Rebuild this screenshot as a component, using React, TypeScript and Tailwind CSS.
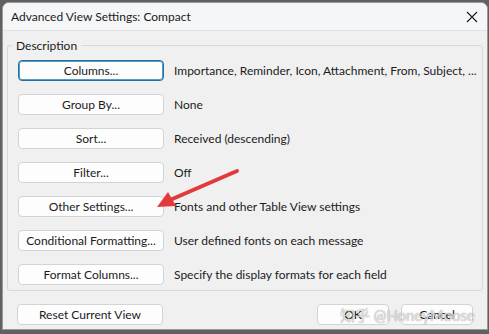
import React from "react";

const rows = [
  { label: "Columns...", desc: "Importance, Reminder, Icon, Attachment, From, Subject, ...", focused: true },
  { label: "Group By...", desc: "None" },
  { label: "Sort...", desc: "Received (descending)" },
  { label: "Filter...", desc: "Off" },
  { label: "Other Settings...", desc: "Fonts and other Table View settings" },
  { label: "Conditional Formatting...", desc: "User defined fonts on each message" },
  { label: "Format Columns...", desc: "Specify the display formats for each field" },
];

function DlgButton({ label, focused, className }: { label: string; focused?: boolean; className?: string }) {
  return (
    <button
      type="button"
      className={[
        "flex h-[21px] items-center justify-center whitespace-nowrap rounded-[4px] bg-[#fdfdfd] text-[12px] text-[#1b1b1b]",
        focused ? "border border-[#1f6f9f] shadow-[inset_0_0_0_1px_#5a9bc4]" : "border border-[#d3d3d3]",
        className ?? "",
      ].join(" ")}
    >
      {label}
    </button>
  );
}

export default function App() {
  return (
    <div
      className="relative h-[334px] w-[489px] overflow-hidden bg-[#5f6163]"
      style={{ fontFamily: 'Lato, "Noto Sans", "Noto Sans CJK SC", sans-serif' }}
    >
      <div className="ml-[2px] mt-[2px] flex h-[328px] w-[486px] flex-col overflow-hidden rounded-t-[7px] border border-[#9a9a9a] bg-[#f0f0f0]">
        {/* title bar */}
        <div className="flex h-[28px] shrink-0 items-center justify-between border-b border-[#e2e2e2] bg-[#f5f6f8] pl-[8px] pr-[9px]">
          <span className="text-[12px] text-[#1b1b1b]">Advanced View Settings: Compact</span>
          <svg width="12" height="12" viewBox="0 0 12 12" className="mt-[1px]">
            <path d="M1 1 L11 11 M11 1 L1 11" stroke="#1b1b1b" strokeWidth="1.1" />
          </svg>
        </div>

        {/* group box */}
        <div className="relative mx-[4px] mt-[14px] h-[246px] rounded-[3px] border border-[#d8d8d8] px-[10px] pt-[14px]">
          <span className="absolute -top-[9px] left-[4px] bg-[#f0f0f0] px-[4px] text-[12px] text-[#1b1b1b]">
            Description
          </span>
          <div className="flex flex-col gap-[13px]">
            {rows.map((r) => (
              <div key={r.label} className="flex items-center gap-[10px]">
                <DlgButton label={r.label} focused={r.focused} className="w-[146px] shrink-0" />
                <span className="whitespace-nowrap text-[12px] text-[#1b1b1b]">{r.desc}</span>
              </div>
            ))}
          </div>
        </div>

        {/* bottom buttons */}
        <div className="mt-[13px] flex items-center px-[14px]">
          <DlgButton label="Reset Current View" className="w-[146px]" />
          <div className="ml-auto flex gap-[12px]">
            <DlgButton label="OK" className="w-[72px]" />
            <DlgButton label="Cancel" className="w-[72px]" />
          </div>
        </div>
      </div>

      {/* watermark */}
      <div className="pointer-events-none absolute left-[340px] top-[304px] whitespace-nowrap text-[15px] text-white/75 [text-shadow:0_0_1px_rgba(0,0,0,0.55)]">
        知乎 @HoneyMoose
      </div>

      {/* red arrow */}
      <svg className="pointer-events-none absolute left-0 top-0" width="489" height="334">
        <line x1="237" y1="171" x2="170" y2="200" stroke="#e23a3c" strokeWidth="4" strokeLinecap="round" />
        <polygon points="157,207 168,192 176,206" fill="#e23a3c" />
      </svg>
    </div>
  );
}
